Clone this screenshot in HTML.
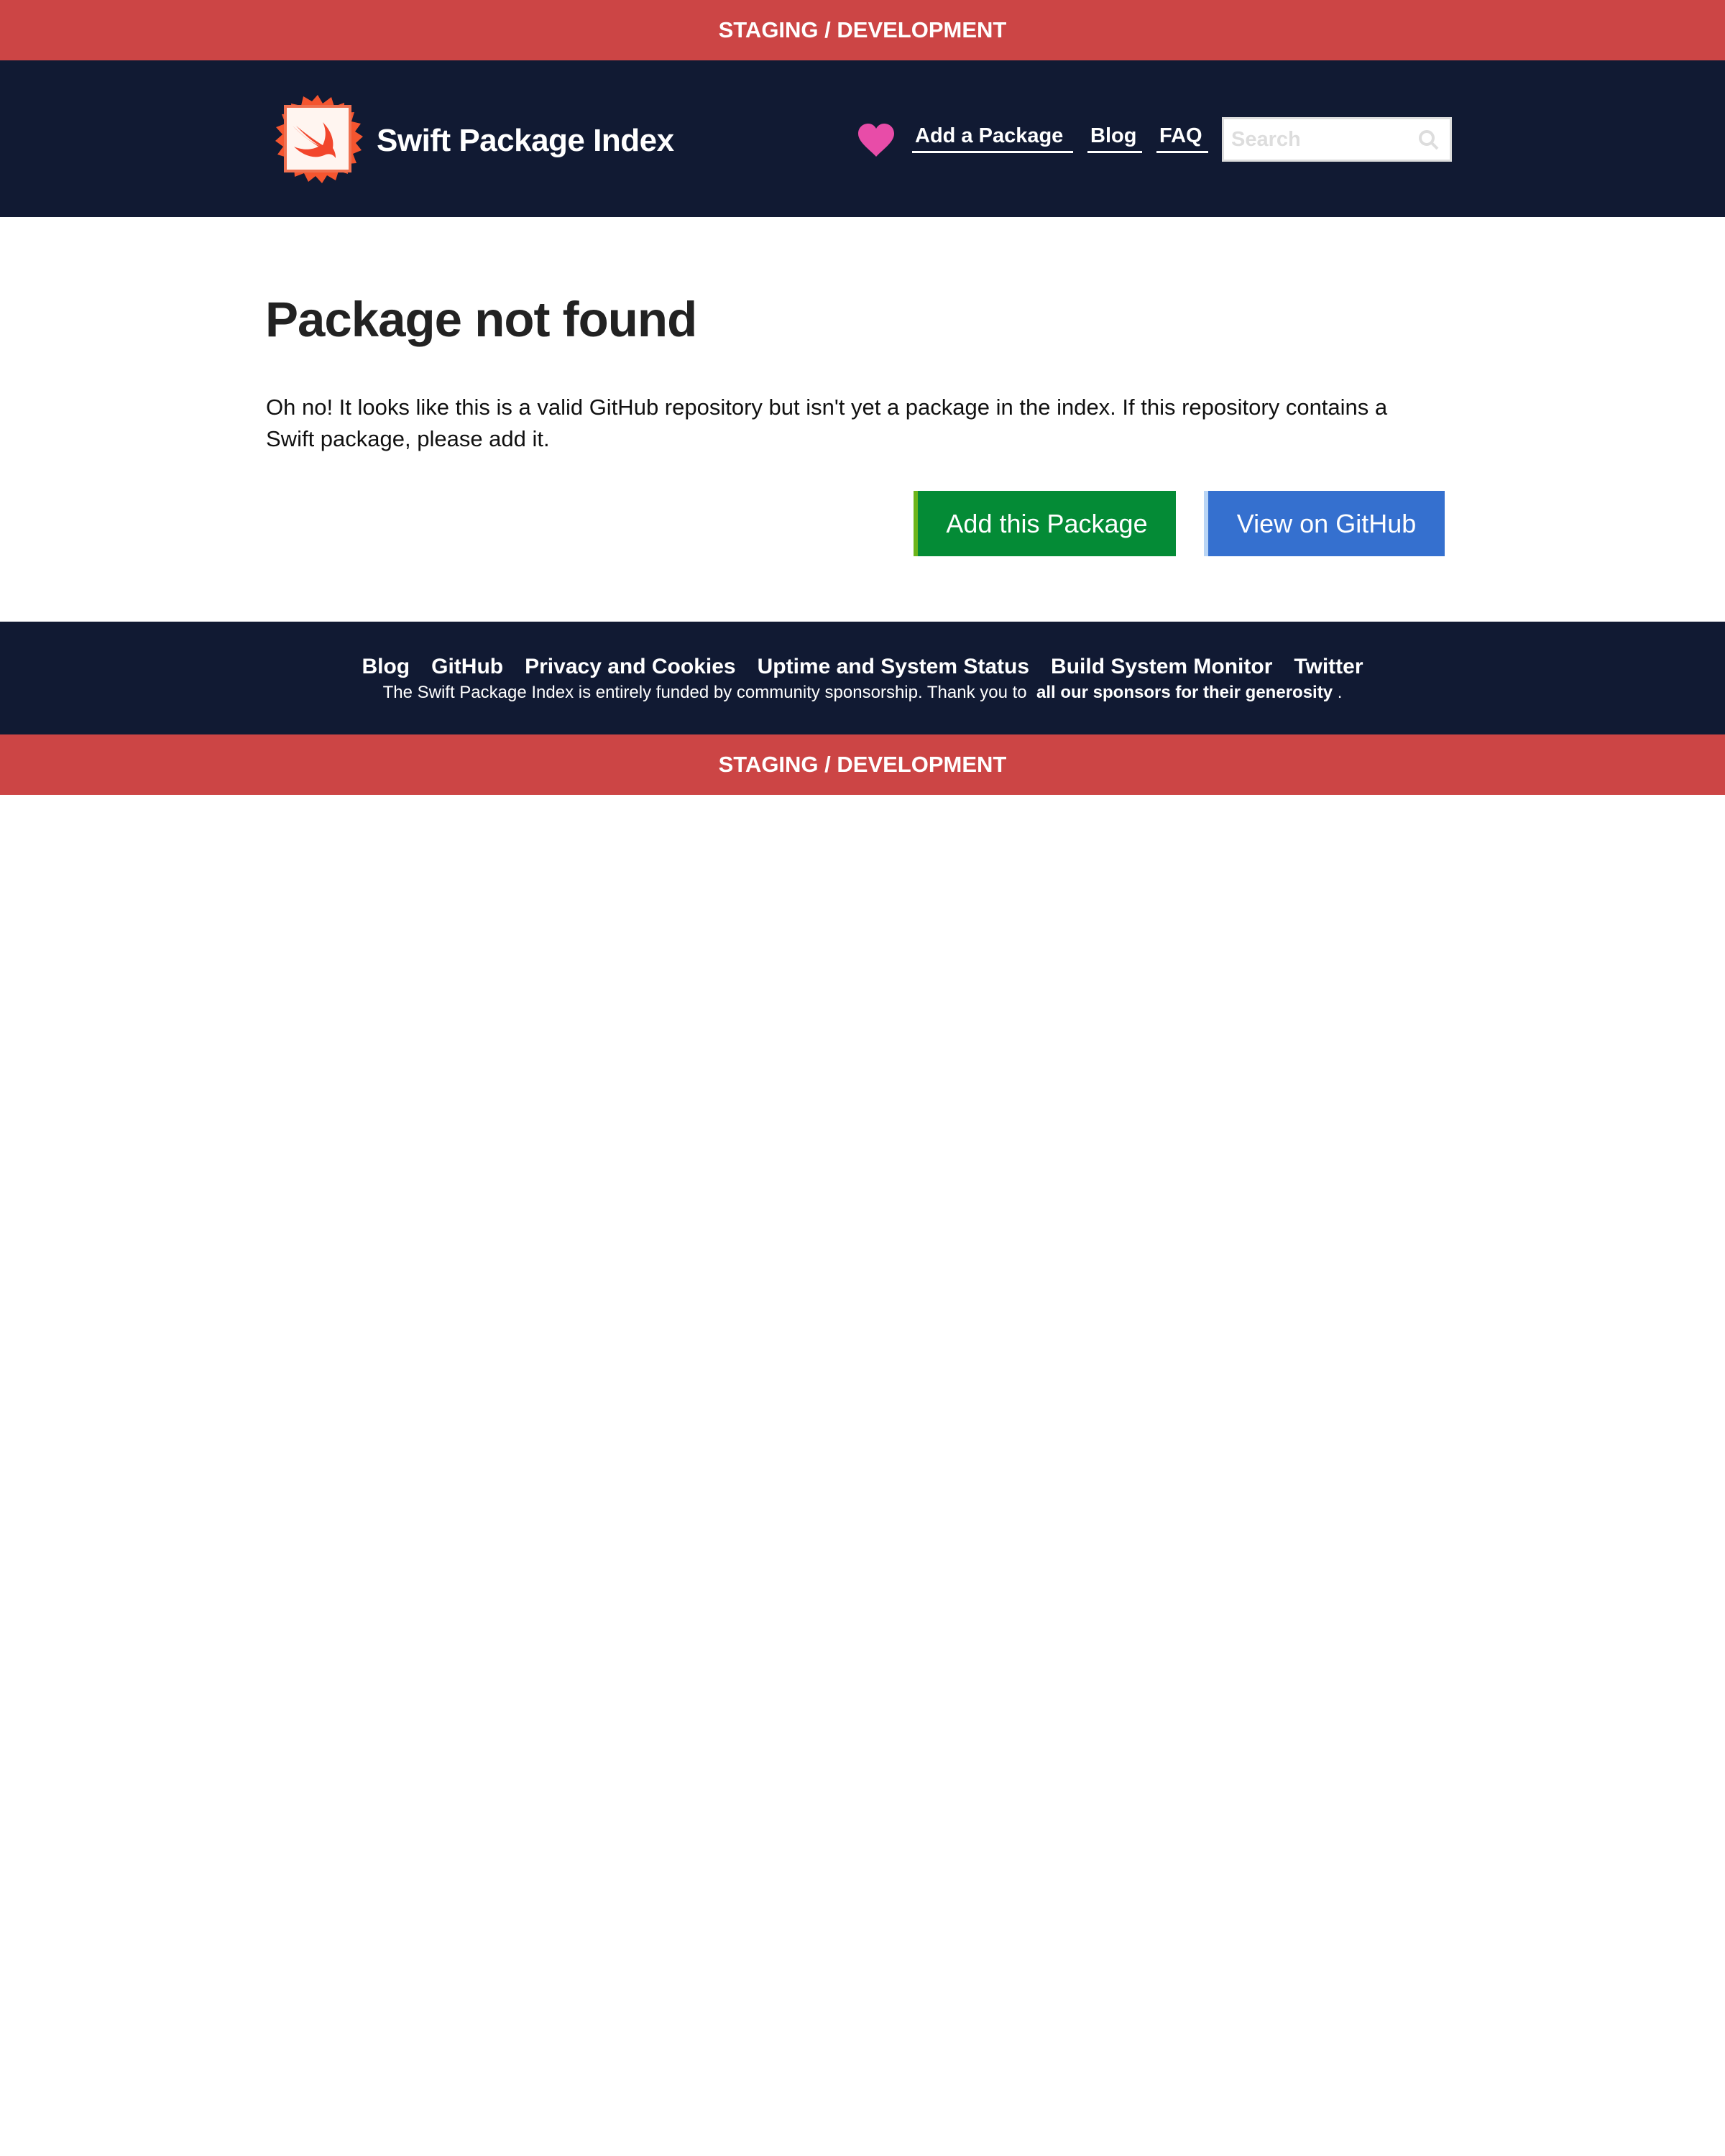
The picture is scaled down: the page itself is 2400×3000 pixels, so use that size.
<!DOCTYPE html>
<html><head><meta charset="utf-8"><style>
*{margin:0;padding:0;box-sizing:border-box}
html,body{width:2400px;height:3000px;background:#fff;font-family:"Liberation Sans",sans-serif;overflow:hidden}
.stg{height:84px;background:#cc4545;color:#fff;font-weight:bold;font-size:31px;text-align:center;line-height:84px}
header{height:218px;background:#111a33;color:#fff}
.logo{position:absolute;left:379px;top:130px;width:126px;height:126px}
.title{position:absolute;left:524px;top:171px;font-size:44px;font-weight:bold;letter-spacing:-0.5px;color:#fff}
.heart{position:absolute;left:1192px;top:172px}
.nav a{position:absolute;top:173px;color:#fff;font-weight:bold;font-size:29px;text-decoration:none;border-bottom:3px solid #fff;padding:0 4px 4px;white-space:nowrap}
.search{position:absolute;left:1700px;top:163px;width:320px;height:62px;background:#fff;border:3px solid #ddd;color:#ddd;font-weight:bold;font-size:29px;line-height:56px;padding-left:10px}
main{height:563px}
h1{position:absolute;left:369px;top:405px;font-size:69px;letter-spacing:-1px;color:#222}
p.t{position:absolute;left:370px;top:545px;width:1700px;font-size:31px;line-height:44px;color:#111}
.btn{position:absolute;top:683px;height:91px;color:#fff;font-size:36px;line-height:91px;text-align:center}
footer{height:157px;background:#111a33;color:#fff;text-align:center}
.fl{padding-top:46px;font-size:30px;font-weight:bold}
.fl span{margin:0 15px}
.fs{font-size:24px;margin-top:5px}
</style></head><body>
<div class="stg">STAGING / DEVELOPMENT</div>
<header>
<svg class="logo" viewBox="0 0 126 126">
<polygon points="63,2 70,14 82,5 86,18 100,13 100,27 114,26 110,39 123,42 115,53 126,60 116,69 124,79 112,84 117,97 104,98 105,112 92,108 88,121 76,114 69,125 60,115 50,123 44,111 31,116 30,102 16,103 20,89 7,85 15,74 4,66 14,57 5,47 18,42 13,29 27,28 26,14 40,17 43,4 55,11" fill="#f4552f"/>
<rect x="18" y="18" width="90" height="90" fill="#fff5f0" stroke="#f07050" stroke-width="4"/>
<path d="M28 45 C45 62 58 70 66 73 C54 66 42 55 33 45 C46 56 60 66 70 72 C76 60 74 48 70 40 C82 52 86 66 84 76 C88 82 88 88 88 90 C84 84 78 83 72 86 C58 92 42 86 30 74 C44 80 56 78 64 74 C52 66 38 56 28 45Z" fill="#f2462c"/>
</svg>
<div class="title">Swift Package Index</div>
<svg class="heart" width="54" height="46" viewBox="0 0 54 46"><path d="M27 46 C18 36 2 26 2 14 C2 5 9 0 16 0 C21 0 25 3 27 7 C29 3 33 0 38 0 C45 0 52 5 52 14 C52 26 36 36 27 46Z" fill="#e84ca8"/></svg>
<div class="nav"><a style="left:1269px;width:224px">Add a Package</a><a style="left:1513px;width:76px">Blog</a><a style="left:1609px;width:72px">FAQ</a></div>
<div class="search">Search<svg style="position:absolute;right:14px;top:14px" width="30" height="30" viewBox="0 0 30 30"><circle cx="12" cy="12" r="9" fill="none" stroke="#ddd" stroke-width="4"/><path d="M19 19 L27 27" stroke="#ddd" stroke-width="4"/></svg></div>
</header>
<main>
<h1>Package not found</h1>
<p class="t">Oh no! It looks like this is a valid GitHub repository but isn't yet a package in the index. If this repository contains a<br>Swift package, please add it.</p>
<div class="btn" style="left:1271px;width:365px;background:#048b36;border-left:6px solid #6cb51a">Add this Package</div>
<div class="btn" style="left:1675px;width:335px;background:#3570cf;border-left:6px solid #b9d5f5">View on GitHub</div>
</main>
<footer>
<div class="fl"><span>Blog</span><span>GitHub</span><span>Privacy and Cookies</span><span>Uptime and System Status</span><span>Build System Monitor</span><span>Twitter</span></div>
<div class="fs">The Swift Package Index is entirely funded by community sponsorship. Thank you to &nbsp;<b>all our sponsors for their generosity</b> .</div>
</footer>
<div class="stg">STAGING / DEVELOPMENT</div>
</body></html>
